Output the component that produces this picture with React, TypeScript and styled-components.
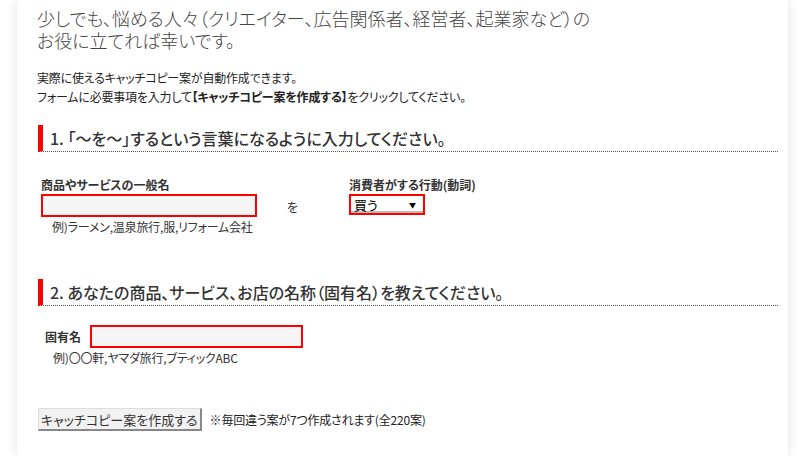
import * as React from 'react';
import styled, { createGlobalStyle } from 'styled-components';

const GlobalStyle = createGlobalStyle`
  html, body {
    margin: 0;
    padding: 0;
    background: #ffffff;
  }
  body {
    font-family: "Noto Sans CJK JP", "Noto Sans", sans-serif;
    font-feature-settings: "palt";
    color: #333;
  }
`;

const Page = styled.div`
  width: 771px;
  min-height: 456px;
  margin-left: 17px;
  background: #fff;
  box-shadow: 0 0 12px rgba(0, 0, 0, 0.12);
  padding: 7px 10px 20px 21px;
  box-sizing: border-box;
`;

const Lead = styled.h1`
  margin: 0 0 0 -1px;
  font-size: 18px;
  font-weight: 300;
  line-height: 22px;
  color: #444;
`;

const Intro = styled.div`
  margin-top: 17px;
  font-size: 12px;
  line-height: 19px;
  color: #222;
  letter-spacing: -0.2px;
  margin-left: -1px;
`;

const Strong = styled.strong`
  font-weight: 700;
  color: #222;
`;

const SectionTitle = styled.h2`
  margin: 0;
  font-size: 16px;
  font-weight: 500;
  line-height: 26px;
  color: #333;
  border-left: 5px solid #ff0000;
  border-bottom: 1px dotted #555;
  padding-left: 7px;
`;

const Section = styled.section<{ $top: number }>`
  margin-top: ${p => p.$top}px;
`;

const FieldRow = styled.div<{ $top: number; $indent: number }>`
  display: flex;
  align-items: flex-start;
  margin-top: ${p => p.$top}px;
  margin-left: ${p => p.$indent}px;
`;

const Field = styled.div<{ $inline?: boolean }>`
  display: flex;
  flex-direction: ${p => (p.$inline ? 'row' : 'column')};
  align-items: ${p => (p.$inline ? 'center' : 'flex-start')};
  gap: ${p => (p.$inline ? '9px' : '1px')};
`;

const Label = styled.label`
  font-size: 12px;
  font-weight: 700;
  color: #333;
  line-height: 16px;
`;

const TextInput = styled.input<{ $width: number }>`
  width: ${p => p.$width}px;
  height: 23px;
  box-sizing: border-box;
  border: 2px solid #ff0000;
  background: #f5f5f5;
  margin: 0;
  padding: 0 4px;
  outline: none;
`;

const Joiner = styled.span`
  font-size: 12px;
  color: #333;
  width: 92px;
  padding: 21px 0 0 30px;
  box-sizing: border-box;
  flex: none;
`;

const SelectBox = styled.div`
  width: 76px;
  height: 21px;
  box-sizing: border-box;
  border: 2px solid #ff0000;
  background: #fff;
  box-shadow: inset 0 -2px 0 #bbb;
  display: flex;
  align-items: center;
  justify-content: space-between;
  padding: 0 7px 0 3px;
  font-size: 13px;
  color: #000;
`;

const Caret = styled.span`
  font-size: 7px;
  color: #000;
`;

const Example = styled.div<{ $indent: number }>`
  font-size: 12px;
  color: #333;
  margin-left: ${p => p.$indent}px;
  margin-top: 2px;
  letter-spacing: -0.2px;
  line-height: 16px;
`;

const Actions = styled.div`
  display: flex;
  align-items: center;
  gap: 8px;
  margin-top: 42px;
`;

const Submit = styled.button`
  height: 23px;
  padding: 0 2px;
  font-family: inherit;
  font-feature-settings: "palt";
  font-size: 13px;
  color: #333;
  background: #f2f2f2;
  border-style: solid;
  border-color: #ddd #888 #888 #ddd;
  border-width: 1px 2px 2px 1px;
`;

const Note = styled.span`
  font-size: 12px;
  color: #222;
  letter-spacing: -0.2px;
`;

const App = () => {
  return (
    <>
      <GlobalStyle />
      <Page>
        <Lead>
          少しでも、悩める人々（クリエイター、広告関係者、経営者、起業家など）の
          <br />
          お役に立てれば幸いです。
        </Lead>
        <Intro>
          実際に使えるキャッチコピー案が自動作成できます。
          <br />
          フォームに必要事項を入力して<Strong>【キャッチコピー案を作成する】</Strong>をクリックしてください。
        </Intro>

        <Section $top={19}>
          <SectionTitle>1. 「～を～」するという言葉になるように入力してください。</SectionTitle>
          <FieldRow $top={25} $indent={3}>
            <Field>
              <Label>商品やサービスの一般名</Label>
              <TextInput $width={216} />
            </Field>
            <Joiner>を</Joiner>
            <Field>
              <Label>消費者がする行動(動詞)</Label>
              <SelectBox>
                買う
                <Caret>▼</Caret>
              </SelectBox>
            </Field>
          </FieldRow>
          <Example $indent={14}>例)ラーメン,温泉旅行,服,リフォーム会社</Example>
        </Section>

        <Section $top={44}>
          <SectionTitle>2. あなたの商品、サービス、お店の名称（固有名）を教えてください。</SectionTitle>
          <FieldRow $top={19} $indent={7}>
            <Field $inline>
              <Label>固有名</Label>
              <TextInput $width={213} />
            </Field>
          </FieldRow>
          <Example $indent={15}>例)〇〇軒,ヤマダ旅行,ブティックABC</Example>
        </Section>

        <Actions>
          <Submit>キャッチコピー案を作成する</Submit>
          <Note>※毎回違う案が7つ作成されます(全220案)</Note>
        </Actions>
      </Page>
    </>
  );
};

export default App;
